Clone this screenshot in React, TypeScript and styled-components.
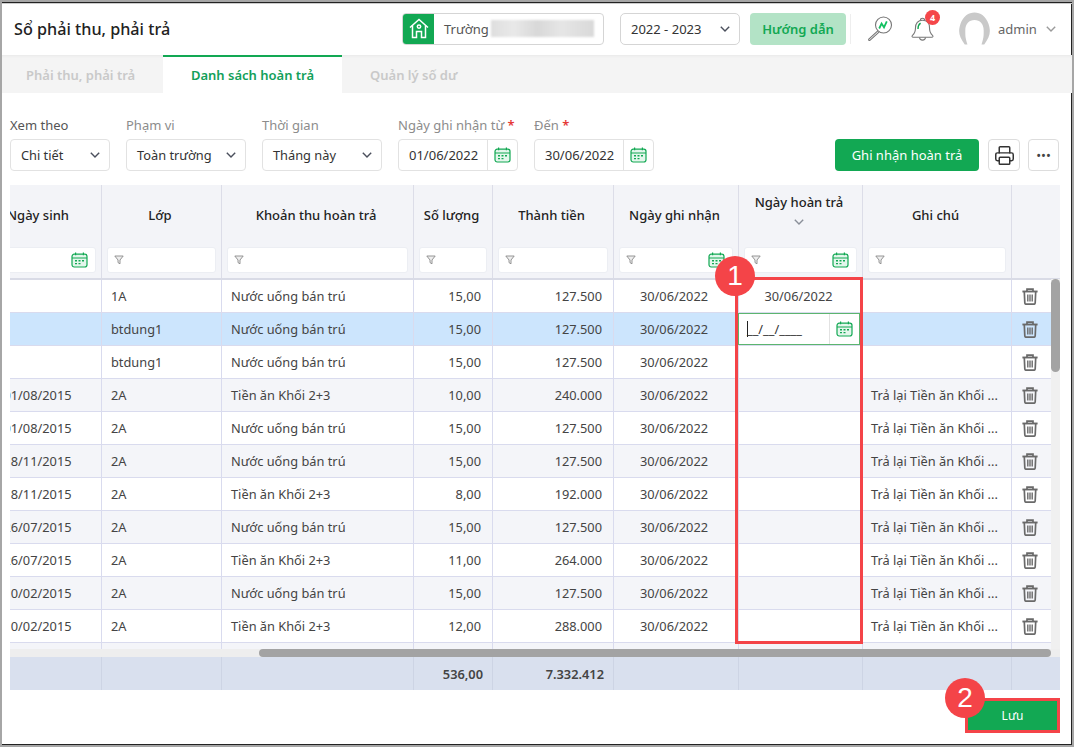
import { createGlobalStyle, styled } from "styled-components";
import { Printer } from "lucide-react";

const columns = "124px 120px 192px 79px 121px 125px 124px 149px 49px";

const rows = [
  { birth: "", cls: "1A", item: "Nước uống bán trú", qty: "15,00", money: "127.500", paid: "30/06/2022", note: "" },
  { birth: "", cls: "btdung1", item: "Nước uống bán trú", qty: "15,00", money: "127.500", paid: "", note: "" },
  { birth: "", cls: "btdung1", item: "Nước uống bán trú", qty: "15,00", money: "127.500", paid: "", note: "" },
  { birth: "01/08/2015", cls: "2A", item: "Tiền ăn Khối 2+3", qty: "10,00", money: "240.000", paid: "", note: "Trả lại Tiền ăn Khối ..." },
  { birth: "01/08/2015", cls: "2A", item: "Nước uống bán trú", qty: "15,00", money: "127.500", paid: "", note: "Trả lại Tiền ăn Khối ..." },
  { birth: "18/11/2015", cls: "2A", item: "Nước uống bán trú", qty: "15,00", money: "127.500", paid: "", note: "Trả lại Tiền ăn Khối ..." },
  { birth: "18/11/2015", cls: "2A", item: "Tiền ăn Khối 2+3", qty: "8,00", money: "192.000", paid: "", note: "Trả lại Tiền ăn Khối ..." },
  { birth: "26/07/2015", cls: "2A", item: "Nước uống bán trú", qty: "15,00", money: "127.500", paid: "", note: "Trả lại Tiền ăn Khối ..." },
  { birth: "26/07/2015", cls: "2A", item: "Tiền ăn Khối 2+3", qty: "11,00", money: "264.000", paid: "", note: "Trả lại Tiền ăn Khối ..." },
  { birth: "10/02/2015", cls: "2A", item: "Nước uống bán trú", qty: "15,00", money: "127.500", paid: "", note: "Trả lại Tiền ăn Khối ..." },
  { birth: "10/02/2015", cls: "2A", item: "Tiền ăn Khối 2+3", qty: "12,00", money: "288.000", paid: "", note: "Trả lại Tiền ăn Khối ..." },
  { birth: "", cls: "", item: "", qty: "", money: "", paid: "", note: "" },
];

function CalendarIcon() {
  return (
    <svg width="17" height="16" viewBox="0 0 17 16" fill="none" stroke="#12a853" strokeWidth="1.2">
      <rect x="1" y="2.2" width="15" height="12.8" rx="2.2" fill="#e4f6ec" />
      <path d="M1 6h15M4.6.6v2.6M12.4.6v2.6" />
      <path d="M4 8.8h2M7.5 8.8h2M11 8.8h2M4 11.6h2M7.5 11.6h2" strokeWidth="1.4" />
    </svg>
  );
}

function FilterIcon() {
  return (
    <svg width="10" height="10" viewBox="0 0 10 10" fill="#eee" stroke="#8a8a8a" strokeWidth="0.9">
      <path d="M.8 1h8.4L6 5v3.8L4 7.6V5z" />
    </svg>
  );
}

function TrashIcon() {
  return (
    <svg width="16" height="17" viewBox="0 0 16 17" fill="none" stroke="#696969" strokeWidth="1.7">
      <path d="M.4 3.5h15.2" strokeWidth="1.9" />
      <path d="M5 3V1.2h6V3" strokeWidth="1.7" />
      <path d="M2.3 3.8l.5 11c0 .9.5 1.4 1.3 1.4h7.800c.8 0 1.300-.5 1.300-1.400l.5-11" />
      <path d="M5.800 6.400v7M8 6.400v7M10.200 6.400v7" strokeWidth="1.400" />
    </svg>
  );
}

function Chevron({ color = "#4a4f5c", size = 10 }: { color?: string; size?: number }) {
  return (
    <svg width={size} height={size * 0.6} viewBox="0 0 10 6" fill="none" stroke={color} strokeWidth="1.4">
      <path d="M.8.8L5 5l4.2-4.2" />
    </svg>
  );
}

function HouseIcon() {
  return (
    <svg width="20" height="21" viewBox="0 0 20 21" fill="none" stroke="#fff" strokeWidth="1.5">
      <path d="M1 9.5L10 1.5l9 8" />
      <path d="M3.5 7.5v12h4v-6h5v6h4v-12" />
      <circle cx="10" cy="8.6" r="1.7" />
    </svg>
  );
}

function InsightIcon() {
  return (
    <svg width="26" height="26" viewBox="0 0 26 26" fill="none">
      <circle cx="16.5" cy="9" r="8" stroke="#777" strokeWidth="1.1" />
      <path d="M10.800 14.800L1.800 23.200c-.6.800.4 1.800 1.100 1.100L12 16.200" stroke="#777" strokeWidth="1.1" />
      <path d="M12.200 12.500l2.400-5 2.400 3.800 2.800-6" stroke="#12c060" strokeWidth="1.8" />
    </svg>
  );
}

function BellIcon() {
  return (
    <svg width="25" height="28" viewBox="0 0 25 28" fill="none" stroke="#777" strokeWidth="1.1">
      <path d="M12.500 5.200c-4.600 0-7 3.500-7 7.600 0 3.600-.8 5.800-3 7.600-.9.800-.5 1.900.8 1.900h18.400c1.300 0 1.700-1.100.8-1.900-2.200-1.800-3-4-3-7.600 0-4.100-2.400-7.600-7-7.600z" />
      <path d="M10.500 5.200c-.4-2.600 4.400-2.600 4 0M9.500 22.500c.2 3.500 5.800 3.500 6 0" />
      <path d="M8 14c0-3 1-4.800 2.600-5.800" stroke="#12a853" strokeWidth="1.4" />
    </svg>
  );
}

function AvatarIcon() {
  return (
    <svg width="33" height="33" viewBox="1.5 1 30 30.500" fill="none">
      <path d="M7.500 31C2.500 24 1 20 3.500 12 6 5 11 1.500 16.500 1.500S27 5 29.500 12c2.500 8 1 12-4 19h-2.500c2-6.500 2-7.500 2-13 0-6-3.500-9.500-8.500-9.500S8 12 8 18c0 5.500 0 6.500 2 13z" fill="#c9c9c9" />
    </svg>
  );
}

export default function App() {
  return (
    <Frame>
      <GlobalStyle />
      <Header>
        <Title>Sổ phải thu, phải trả</Title>
        <School>
          <SchoolBadge>
            <HouseIcon />
          </SchoolBadge>
          <SchoolName>Trường</SchoolName>
          <Blurred />
        </School>
        <YearSelect>
          2022 - 2023
          <Chevron />
        </YearSelect>
        <GuideButton>Hướng dẫn</GuideButton>
        <Divider />
        <HeaderIcon>
          <InsightIcon />
        </HeaderIcon>
        <BellWrap>
          <BellIcon />
          <BellCount>4</BellCount>
        </BellWrap>
        <AvatarWrap>
          <AvatarIcon />
        </AvatarWrap>
        <UserName>admin</UserName>
        <Chevron color="#9a9a9a" />
      </Header>

      <Tabs>
        <Tab $width={161} $pad={24}>
          Phải thu, phải trả
        </Tab>
        <Tab $width={179} $active>
          Danh sách hoàn trả
        </Tab>
        <Tab $width={158} $pad={28}>
          Quản lý số dư
        </Tab>
      </Tabs>

      <Toolbar>
        <Field>
          <FieldLabel $dark>Xem theo</FieldLabel>
          <SelectBox $width={100}>
            Chi tiết
            <Chevron />
          </SelectBox>
        </Field>
        <Field>
          <FieldLabel>Phạm vi</FieldLabel>
          <SelectBox $width={120}>
            Toàn trường
            <Chevron />
          </SelectBox>
        </Field>
        <Field>
          <FieldLabel>Thời gian</FieldLabel>
          <SelectBox $width={120}>
            Tháng này
            <Chevron />
          </SelectBox>
        </Field>
        <Field>
          <FieldLabel>
            Ngày ghi nhận từ <Required>*</Required>
          </FieldLabel>
          <DateBox>
            <DateText>01/06/2022</DateText>
            <DateAddon>
              <CalendarIcon />
            </DateAddon>
          </DateBox>
        </Field>
        <Field>
          <FieldLabel>
            Đến <Required>*</Required>
          </FieldLabel>
          <DateBox>
            <DateText>30/06/2022</DateText>
            <DateAddon>
              <CalendarIcon />
            </DateAddon>
          </DateBox>
        </Field>
        <Actions>
          <PrimaryButton>Ghi nhận hoàn trả</PrimaryButton>
          <IconButton $width={32}>
            <Printer size={21} strokeWidth={1.7} color="#333" />
          </IconButton>
          <IconButton $width={31}>
            <Dots>•••</Dots>
          </IconButton>
        </Actions>
      </Toolbar>

      <TableArea>
        <Scroller>
          <HeadRow>
            <HeadCell>
              <HeadTitle>Ngày sinh</HeadTitle>
              <FilterBox>
                <CalendarIcon />
              </FilterBox>
            </HeadCell>
            <HeadCell>
              <HeadTitle>Lớp</HeadTitle>
              <FilterBox $left>
                <FilterIcon />
              </FilterBox>
            </HeadCell>
            <HeadCell>
              <HeadTitle>Khoản thu hoàn trả</HeadTitle>
              <FilterBox $left>
                <FilterIcon />
              </FilterBox>
            </HeadCell>
            <HeadCell>
              <HeadTitle>Số lượng</HeadTitle>
              <FilterBox $left>
                <FilterIcon />
              </FilterBox>
            </HeadCell>
            <HeadCell>
              <HeadTitle>Thành tiền</HeadTitle>
              <FilterBox $left>
                <FilterIcon />
              </FilterBox>
            </HeadCell>
            <HeadCell>
              <HeadTitle>Ngày ghi nhận</HeadTitle>
              <FilterBox $left $between>
                <FilterIcon />
                <CalendarIcon />
              </FilterBox>
            </HeadCell>
            <HeadCell>
              <HeadTitle $stacked>
                Ngày hoàn trả
                <Chevron color="#8a8f99" />
              </HeadTitle>
              <FilterBox $left $between>
                <FilterIcon />
                <CalendarIcon />
              </FilterBox>
            </HeadCell>
            <HeadCell>
              <HeadTitle>Ghi chú</HeadTitle>
              <FilterBox $left>
                <FilterIcon />
              </FilterBox>
            </HeadCell>
            <HeadCell />
          </HeadRow>

          <Body>
            {rows.map((row, i) => (
              <BodyRow key={i} $alt={i % 2 === 1} $selected={i === 1}>
                <Cell $align="center">{row.birth}</Cell>
                <Cell>{row.cls}</Cell>
                <Cell>{row.item}</Cell>
                <Cell $align="right">{row.qty}</Cell>
                <Cell $align="right">{row.money}</Cell>
                <Cell $align="center">{row.item ? "30/06/2022" : ""}</Cell>
                {i === 1 ? (
                  <EditCell>
                    <EditText>
                      <Caret />
                      __/__/____
                    </EditText>
                    <DateAddon>
                      <CalendarIcon />
                    </DateAddon>
                  </EditCell>
                ) : (
                  <Cell $align="center">{row.paid}</Cell>
                )}
                <NoteCell>{row.note}</NoteCell>
                <ActionCell>{row.item ? <TrashIcon /> : null}</ActionCell>
              </BodyRow>
            ))}
          </Body>

          <FootRow>
            <FootCell />
            <FootCell />
            <FootCell />
            <FootCell $bold>536,00</FootCell>
            <FootCell $bold>7.332.412</FootCell>
            <FootCell />
            <FootCell />
            <FootCell />
            <FootCell />
          </FootRow>
        </Scroller>

        <VerticalTrack>
          <VerticalThumb />
        </VerticalTrack>
        <HorizontalTrack>
          <HorizontalThumb />
        </HorizontalTrack>
        <Mark1 />
        <Step1>1</Step1>
      </TableArea>

      <Footer>
        <SaveButton>Lưu</SaveButton>
        <Step2>2</Step2>
      </Footer>
    </Frame>
  );
}

const GlobalStyle = createGlobalStyle`
  html, body {
    margin: 0;
    padding: 0;
    background: #fff;
  }
  * {
    box-sizing: border-box;
  }
  body {
    font-family: "Noto Sans", "Open Sans", sans-serif;
    font-size: 13px;
    color: #333;
  }
`;

const Frame = styled.div`
  position: relative;
  width: 1074px;
  height: 747px;
  overflow: hidden;
  background: #fff;
  border: 2px solid #a6a6a6;
  box-shadow: inset 0 1px 0 #222, inset 0 2px 0 #ccc, inset -1px 0 0 #222, inset 0 -1px 0 #222;
`;

const Header = styled.div`
  display: flex;
  align-items: center;
  height: 53px;
  padding: 0 0 0 12px;
`;

const Title = styled.div`
  width: 388px;
  font-size: 16.2px;
  font-weight: 500;
  color: #222;
`;

const School = styled.div`
  display: flex;
  align-items: center;
  width: 202px;
  height: 32px;
  border: 1px solid #d5d5d5;
  border-radius: 4px;
  overflow: hidden;
`;

const SchoolBadge = styled.div`
  display: flex;
  align-items: center;
  justify-content: center;
  flex: none;
  width: 31px;
  height: 32px;
  background: #12a853;
`;

const SchoolName = styled.span`
  margin-left: 10px;
  font-size: 13px;
  color: #555;
`;

const Blurred = styled.div`
  width: 103px;
  height: 17px;
  margin-left: 2px;
  background: linear-gradient(90deg, #dedede, #e9e9e9 22%, #d8d8d8 45%, #e6e6e6 68%, #d9d9d9);
  filter: blur(1px);
`;

const YearSelect = styled.div`
  display: flex;
  align-items: center;
  justify-content: space-between;
  width: 120px;
  height: 32px;
  margin-left: 16px;
  padding: 0 9px 0 10px;
  border: 1px solid #d5d5d5;
  border-radius: 5px;
  font-size: 13px;
  color: #333;
`;

const GuideButton = styled.div`
  display: flex;
  align-items: center;
  justify-content: center;
  width: 96px;
  height: 32px;
  margin-left: 10px;
  border-radius: 4px;
  background: #b3e3c6;
  color: #12a853;
  font-size: 13px;
  font-weight: 600;
`;

const Divider = styled.div`
  width: 1px;
  height: 30px;
  margin-left: 4px;
  background: #eee;
`;

const HeaderIcon = styled.div`
  display: flex;
  margin-left: 16px;
`;

const BellWrap = styled.div`
  position: relative;
  display: flex;
  margin-left: 17px;
`;

const BellCount = styled.span`
  position: absolute;
  top: -5px;
  left: 15px;
  display: flex;
  align-items: center;
  justify-content: center;
  width: 15px;
  height: 15px;
  border-radius: 50%;
  background: #f4474a;
  color: #fff;
  font-size: 9px;
  font-weight: 700;
`;

const AvatarWrap = styled.div`
  display: flex;
  margin-left: 23px;
`;

const UserName = styled.span`
  margin: 0 9px 0 7px;
  font-size: 13px;
  color: #666;
`;

const Tabs = styled.div`
  display: flex;
  height: 38px;
  background: #f4f4f4;
  box-shadow: inset 0 3px 3px -2px #e8e8e8;
`;

const Tab = styled.div<{ $width: number; $active?: boolean; $pad?: number }>`
  display: flex;
  align-items: center;
  justify-content: ${(p) => (p.$active ? "center" : "flex-start")};
  flex: none;
  width: ${(p) => p.$width}px;
  padding-left: ${(p) => p.$pad ?? 0}px;
  font-size: 13px;
  font-weight: 600;
  color: ${(p) => (p.$active ? "#12a05a" : "#c9c9c9")};
  background: ${(p) => (p.$active ? "#fff" : "transparent")};
  border-top: 2px solid ${(p) => (p.$active ? "#12a853" : "transparent")};
`;

const Toolbar = styled.div`
  display: flex;
  align-items: flex-end;
  gap: 16px;
  height: 78px;
  padding: 0 13px 0 8px;
`;

const Field = styled.div`
  display: flex;
  flex-direction: column;
  gap: 5px;
`;

const FieldLabel = styled.div<{ $dark?: boolean }>`
  font-size: 13px;
  line-height: 18px;
  color: ${(p) => (p.$dark ? "#555" : "#8c8c8c")};
`;

const Required = styled.span`
  color: #e53935;
  font-weight: 600;
`;

const SelectBox = styled.div<{ $width: number }>`
  display: flex;
  align-items: center;
  justify-content: space-between;
  width: ${(p) => p.$width}px;
  height: 32px;
  padding: 0 9px 0 10px;
  border: 1px solid #e2e2e2;
  border-radius: 4px;
  font-size: 12.8px;
  color: #333;
`;

const DateBox = styled.div`
  display: flex;
  align-items: stretch;
  width: 120px;
  height: 32px;
  border: 1px solid #e2e2e2;
  border-radius: 4px;
`;

const DateText = styled.div`
  display: flex;
  align-items: center;
  flex: 1;
  padding-left: 10px;
  font-size: 13px;
  color: #333;
`;

const DateAddon = styled.div`
  display: flex;
  align-items: center;
  justify-content: center;
  flex: none;
  width: 30px;
  border-left: 1px solid #e2e2e2;
`;

const Actions = styled.div`
  display: flex;
  align-items: center;
  gap: 8px;
  margin-left: auto;
  height: 32px;
`;

const PrimaryButton = styled.div`
  display: flex;
  align-items: center;
  justify-content: center;
  width: 144px;
  height: 32px;
  margin-right: 1px;
  border-radius: 4px;
  background: #12a853;
  color: #fff;
  font-size: 13px;
  font-weight: 400;
`;

const IconButton = styled.div<{ $width: number }>`
  display: flex;
  align-items: center;
  justify-content: center;
  width: ${(p) => p.$width}px;
  height: 32px;
  border: 1px solid #ddd;
  border-radius: 4px;
`;

const Dots = styled.span`
  font-size: 13px;
  color: #444;
`;

const TableArea = styled.div`
  position: relative;
  width: 1050px;
  height: 505px;
  margin: 14px 0 0 8px;
`;

const Scroller = styled.div`
  width: 100%;
  height: 100%;
  overflow: hidden;
`;

const HeadRow = styled.div`
  display: grid;
  grid-template-columns: ${columns};
  width: 1083px;
  height: 95px;
  margin-left: -32px;
  background: #f3f4f8;
  border-bottom: 2px solid #d9dbe6;
`;

const HeadCell = styled.div`
  display: flex;
  flex-direction: column;
  align-items: center;
  padding: 0 5px 5px;
  border-right: 1px solid #dcdde8;
`;

const HeadTitle = styled.div<{ $stacked?: boolean }>`
  display: flex;
  flex-direction: column;
  align-items: center;
  justify-content: ${(p) => (p.$stacked ? "flex-start" : "center")};
  gap: 8px;
  flex: 1;
  padding: ${(p) => (p.$stacked ? "8px 3px 0 0" : "0 3px 3px 0")};
  font-size: 13px;
  font-weight: 500;
  color: #222;
`;

const FilterBox = styled.div<{ $left?: boolean; $between?: boolean }>`
  display: flex;
  align-items: center;
  justify-content: ${(p) => (p.$between ? "space-between" : p.$left ? "flex-start" : "flex-end")};
  align-self: stretch;
  height: 26px;
  padding: 0 7px 0 6px;
  background: #fff;
  border: 1px solid #eceef3;
  border-radius: 3px;
`;

const Body = styled.div`
  height: 369px;
  margin-left: -32px;
  width: 1083px;
  overflow: hidden;
`;

const BodyRow = styled.div<{ $alt?: boolean; $selected?: boolean }>`
  display: grid;
  grid-template-columns: ${columns};
  height: 33px;
  background: ${(p) => (p.$selected ? "#cce5fd" : p.$alt ? "#f4f5f9" : "#fff")};
  border-bottom: 1px solid #d9dbee;
`;

const Cell = styled.div<{ $align?: string }>`
  display: flex;
  align-items: center;
  justify-content: ${(p) => (p.$align === "center" ? "center" : p.$align === "right" ? "flex-end" : "flex-start")};
  padding: 0 ${(p) => (p.$align === "center" ? "13px" : p.$align ? "11px" : "9px")} 0 9px;
  white-space: nowrap;
  font-size: 12.8px;
  color: #444;
  border-right: 1px solid #d9dbee;
`;

const NoteCell = styled(Cell)`
  padding-left: 8px;
`;

const ActionCell = styled.div`
  display: flex;
  align-items: center;
  justify-content: center;
  padding-right: 13px;
`;

const EditCell = styled.div`
  display: flex;
  align-items: stretch;
  height: 32px;
  margin: 0 3px 0 -1px;
  background: #fff;
  border: 1px solid #5cb56f;
`;

const EditText = styled.div`
  position: relative;
  display: flex;
  align-items: center;
  flex: 1;
  padding-left: 8px;
  font-size: 12.8px;
  color: #333;
`;

const Caret = styled.span`
  position: absolute;
  left: 8px;
  top: 7px;
  width: 1px;
  height: 16px;
  background: #222;
`;

const FootRow = styled.div`
  display: grid;
  grid-template-columns: ${columns};
  width: 1083px;
  height: 33px;
  margin: 8px 0 0 -32px;
  background: #d9e0ee;
`;

const FootCell = styled.div<{ $bold?: boolean }>`
  display: flex;
  align-items: center;
  justify-content: flex-end;
  padding: 0 9px;
  font-size: 12.8px;
  font-weight: ${(p) => (p.$bold ? 600 : 400)};
  color: #444;
  border-right: 1px solid #cdd4e4;
`;

const VerticalTrack = styled.div`
  position: absolute;
  top: 94px;
  right: 0;
  width: 9px;
  height: 378px;
  background: #f0f0f0;
`;

const VerticalThumb = styled.div`
  width: 9px;
  height: 93px;
  border-radius: 5px;
  background: #a3a3a3;
`;

const HorizontalTrack = styled.div`
  position: absolute;
  top: 464px;
  left: 0;
  width: 1050px;
  height: 8px;
  background: #eee;
`;

const HorizontalThumb = styled.div`
  width: 792px;
  height: 8px;
  margin-left: 249px;
  border-radius: 4px;
  background: #a3a3a3;
`;

const Mark1 = styled.div`
  position: absolute;
  top: 92px;
  left: 725px;
  width: 128px;
  height: 367px;
  border: 3px solid #f44448;
`;

const StepBadge = styled.div`
  position: absolute;
  display: flex;
  align-items: center;
  justify-content: center;
  width: 40px;
  height: 40px;
  border-radius: 50%;
  background: #f44448;
  color: #fff;
  font-size: 28px;
  font-family: "Liberation Sans", sans-serif;
`;

const Step1 = styled(StepBadge)`
  top: 71px;
  left: 705px;
`;

const Footer = styled.div`
  position: relative;
  display: flex;
  justify-content: flex-end;
  padding: 8px 12px 0 0;
`;

const SaveButton = styled.div`
  display: flex;
  align-items: center;
  justify-content: center;
  width: 95px;
  height: 35px;
  background: #12a853;
  border: 3px solid #f44448;
  color: #fff;
  font-size: 12px;
`;

const Step2 = styled(StepBadge)`
  top: -12px;
  left: 943px;
`;
